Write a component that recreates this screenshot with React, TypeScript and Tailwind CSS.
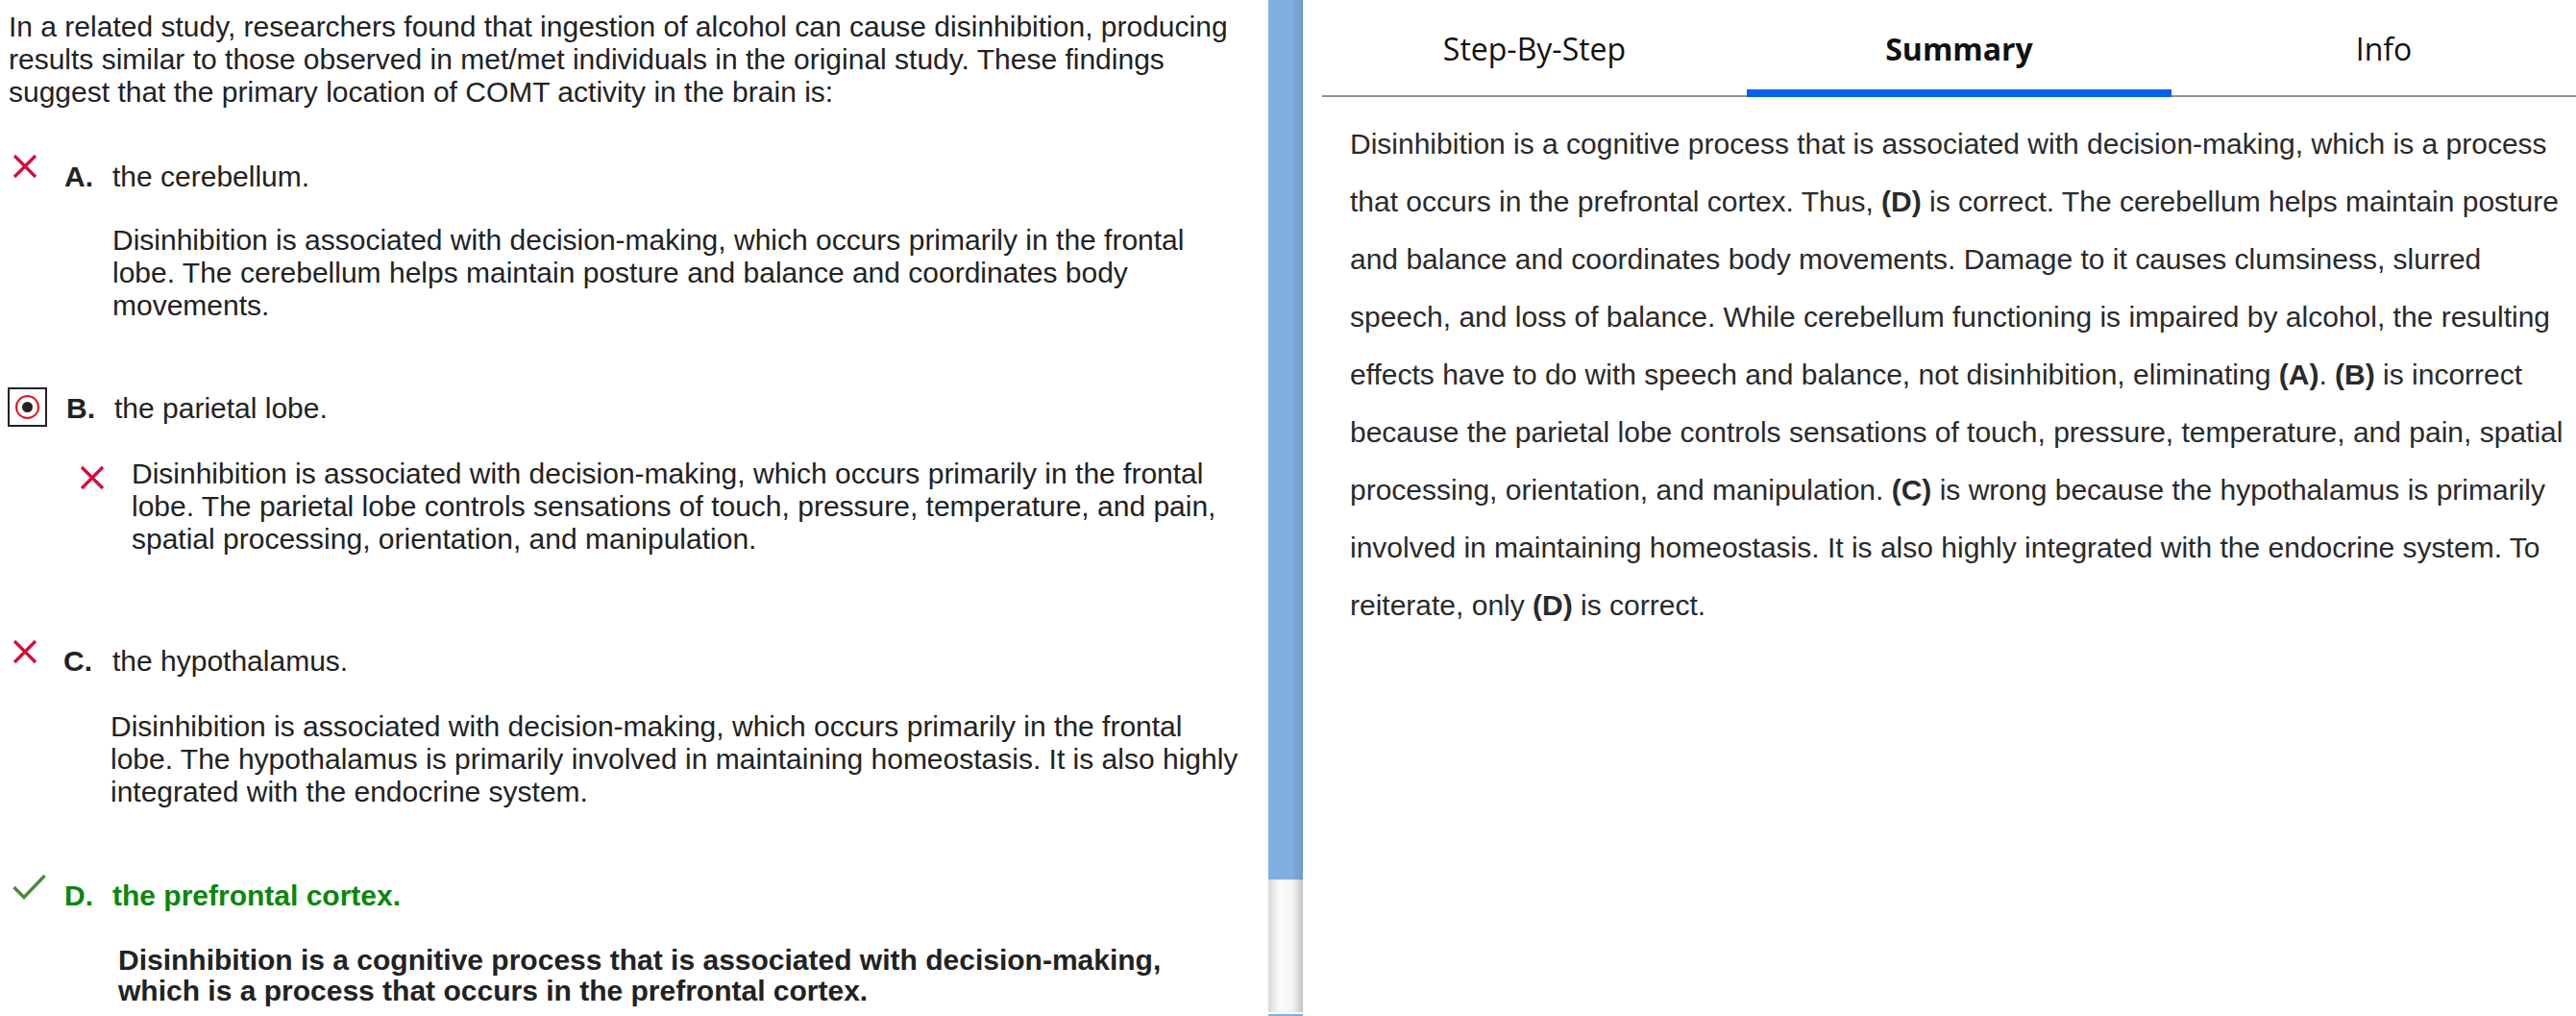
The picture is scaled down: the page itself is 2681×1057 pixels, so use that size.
import React from "react";

function CrossIcon() {
    return (
        <svg width="26" height="26" viewBox="0 0 26 26" className="block">
            <path d="M2 2 L24 24 M24 2 L2 24" stroke="#d8093b" strokeWidth="3.2" strokeLinecap="butt" fill="none" />
        </svg>
    );
}

function CheckIcon() {
    return (
        <svg width="35" height="27" viewBox="0 0 35 27" className="block">
            <path d="M1.5 14 L12 24.5 L33.5 2" stroke="#4a8a3a" strokeWidth="3.4" fill="none" />
        </svg>
    );
}

function RadioBox() {
    return (
        <div className="w-[41px] h-[41px] border-2 border-[#222] flex items-center justify-center">
            <div className="w-[25px] h-[25px] rounded-full border-2 border-[#e8101c] flex items-center justify-center">
                <div className="w-[11px] h-[11px] rounded-full bg-[#222]" />
            </div>
        </div>
    );
}

const tabs = [
    { label: "Step-By-Step", active: false },
    { label: "Summary", active: true },
    { label: "Info", active: false },
];

export default function App() {
    return (
        <div className="w-[2681px] h-[1057px] overflow-hidden flex bg-white text-[#222] font-['Liberation_Sans',Arial,sans-serif]">
            {/* left: question and options */}
            <div className="w-[1320px] shrink-0 pr-[25px] text-[30px] leading-[34px]">
                <p className="pl-[9px] pt-[11px]">
                    In a related study, researchers found that ingestion of alcohol can cause disinhibition, producing
                    results similar to those observed in met/met individuals in the original study. These findings
                    suggest that the primary location of COMT activity in the brain is:
                </p>

                {/* A */}
                <div className="flex items-start mt-[54px]">
                    <div className="w-[67px] shrink-0 pl-[13px] -mt-[7px]">
                        <CrossIcon />
                    </div>
                    <div className="w-[50px] shrink-0 font-bold">A.</div>
                    <div>the cerebellum.</div>
                </div>
                <p className="pl-[117px] mt-[32px]">
                    Disinhibition is associated with decision-making, which occurs primarily in the frontal lobe. The
                    cerebellum helps maintain posture and balance and coordinates body movements.
                </p>

                {/* B */}
                <div className="flex items-start mt-[73px]">
                    <div className="w-[69px] shrink-0 pl-[8px] -mt-[5px]">
                        <RadioBox />
                    </div>
                    <div className="w-[50px] shrink-0 font-bold">B.</div>
                    <div>the parietal lobe.</div>
                </div>
                <div className="flex items-start mt-[32px]">
                    <div className="w-[137px] shrink-0 pl-[83px] mt-[8px]">
                        <CrossIcon />
                    </div>
                    <p>
                        Disinhibition is associated with decision-making, which occurs primarily in the frontal lobe.
                        The parietal lobe controls sensations of touch, pressure, temperature, and pain, spatial
                        processing, orientation, and manipulation.
                    </p>
                </div>

                {/* C */}
                <div className="flex items-start mt-[93px]">
                    <div className="w-[66px] shrink-0 pl-[13px] -mt-[6px]">
                        <CrossIcon />
                    </div>
                    <div className="w-[51px] shrink-0 font-bold">C.</div>
                    <div>the hypothalamus.</div>
                </div>
                <p className="pl-[115px] mt-[34px]">
                    Disinhibition is associated with decision-making, which occurs primarily in the frontal lobe. The
                    hypothalamus is primarily involved in maintaining homeostasis. It is also highly integrated with
                    the endocrine system.
                </p>

                {/* D */}
                <div className="flex items-start mt-[74px] text-[#0a870a] font-bold">
                    <div className="w-[67px] shrink-0 pl-[13px] -mt-[6px]">
                        <CheckIcon />
                    </div>
                    <div className="w-[50px] shrink-0">D.</div>
                    <div>the prefrontal cortex.</div>
                </div>
                <p className="pl-[123px] mt-[34px] font-bold leading-[32px]">
                    Disinhibition is a cognitive process that is associated with decision-making, which is a process
                    that occurs in the prefrontal cortex.
                </p>
            </div>

            {/* splitter */}
            <div className="w-[36px] shrink-0 flex flex-col">
                <div className="h-[915px] bg-[linear-gradient(to_right,#80aee1_0%,#80aee1_65%,#6f98c6_100%)]" />
                <div className="h-[138px] bg-[linear-gradient(to_right,#d8d8d8_0%,#fbfbfb_35%,#f4f4f4_70%,#c4c4c4_100%)]" />
                <div className="h-[2px] bg-white" />
                <div className="flex-1 bg-[#80aee1]" />
            </div>

            {/* right: tabs and summary */}
            <div className="flex-1 min-w-0 pl-[20px] overflow-hidden">
                <div className="flex h-[101px] border-b-2 border-[#8a949c] font-['Open_Sans',sans-serif] text-[32px] text-[#111]">
                    {tabs.map((t) => (
                        <div key={t.label} className="relative w-[442px] shrink-0 text-center pt-[27px] leading-normal">
                            <span className={t.active ? "font-bold" : ""}>{t.label}</span>
                            {t.active && <div className="absolute left-0 right-0 -bottom-[2px] h-[8px] bg-[#0062e4]" />}
                        </div>
                    ))}
                </div>
                <p className="pl-[29px] pr-[6px] pt-[19px] text-[30px] leading-[60px] text-[#2a2a2a]">
                    Disinhibition is a cognitive process that is associated with decision-making, which is a process
                    that occurs in the prefrontal cortex. Thus, <b>(D)</b> is correct. The cerebellum helps maintain
                    posture and balance and coordinates body movements. Damage to it causes clumsiness, slurred speech,
                    and loss of balance. While cerebellum functioning is impaired by alcohol, the resulting effects have
                    to do with speech and balance, not disinhibition, eliminating <b>(A)</b>. <b>(B)</b> is incorrect
                    because the parietal lobe controls sensations of touch, pressure, temperature, and pain, spatial
                    processing, orientation, and manipulation. <b>(C)</b> is wrong because the hypothalamus is
                    primarily involved in maintaining homeostasis. It is also highly integrated with the endocrine
                    system. To reiterate, only <b>(D)</b> is correct.
                </p>
            </div>
        </div>
    );
}
